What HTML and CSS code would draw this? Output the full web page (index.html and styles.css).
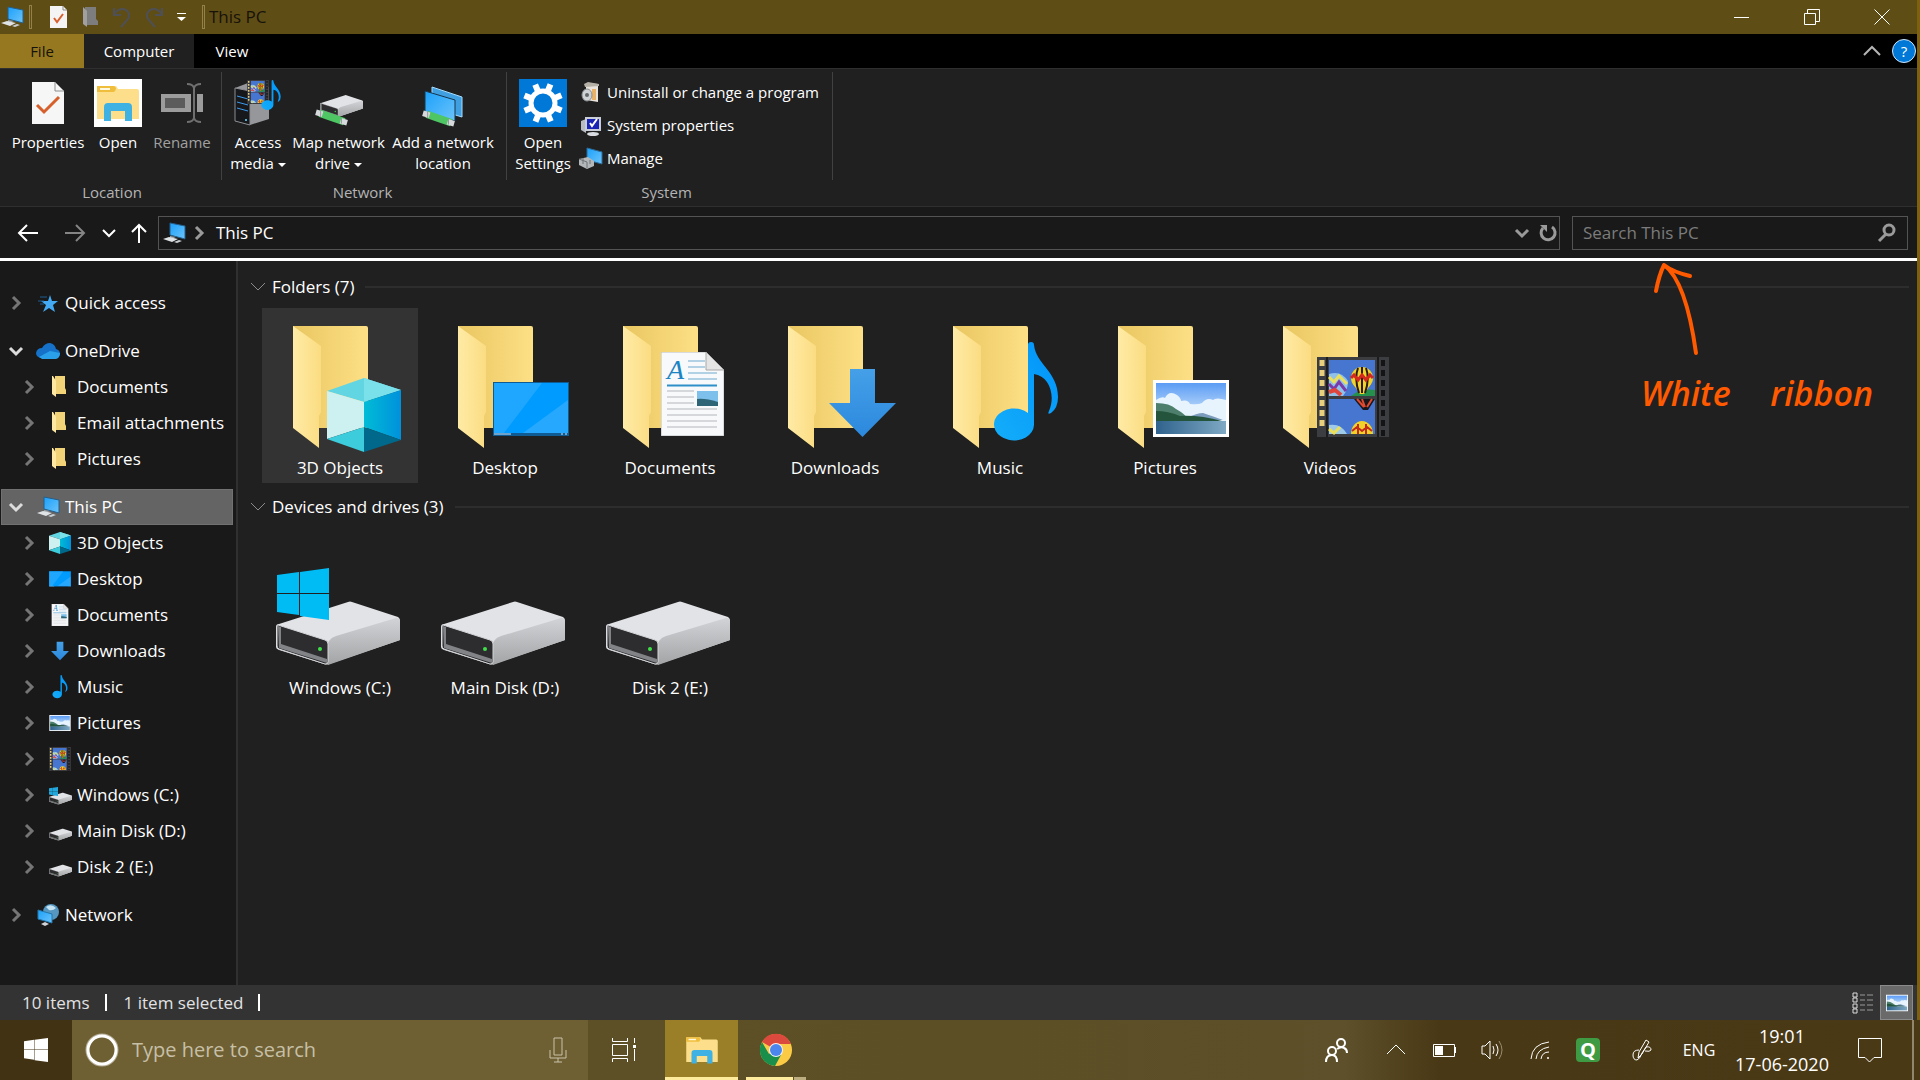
FILE: index.html
```html
<!DOCTYPE html>
<html lang="en">
<head>
  <meta charset="UTF-8">
  <meta name="viewport" content="width=device-width, initial-scale=1.0">
  <title>This PC</title>
  <link rel="stylesheet" href="styles.css">
</head>
<body>

<!-- shared icons -->
<svg class="sprites" aria-hidden="true">
  <defs>
    <linearGradient id="gBack" x1="0" x2="1"><stop offset="0" stop-color="#e9c660"/><stop offset="1" stop-color="#fde086"/></linearGradient>
    <linearGradient id="gFront" x1="0" x2="1"><stop offset="0" stop-color="#ffeba6"/><stop offset="1" stop-color="#fbdc82"/></linearGradient>
    <linearGradient id="gScreen" x1="0" y1="0" x2="1" y2="1"><stop offset="0" stop-color="#1ba0fb"/><stop offset="1" stop-color="#6cc4fa"/></linearGradient>
    <linearGradient id="gCube" x1="0" x2="1"><stop offset="0" stop-color="#00bcd6"/><stop offset="1" stop-color="#0091dc"/></linearGradient>
    <linearGradient id="gSky" x1="0" y1="0" x2="0" y2="1"><stop offset="0" stop-color="#5b9cf5"/><stop offset="1" stop-color="#dff0fb"/></linearGradient>
    <linearGradient id="gSea" x1="0" x2="1"><stop offset="0" stop-color="#2f628c"/><stop offset="1" stop-color="#7fa9c4"/></linearGradient>
    <linearGradient id="gSide" x1="0" y1="0" x2="0" y2="1"><stop offset="0" stop-color="#d2d3d6"/><stop offset="1" stop-color="#a3a4a6"/></linearGradient>
    <linearGradient id="gNote" x1="0" y1="1" x2="1" y2="0"><stop offset="0" stop-color="#14adf9"/><stop offset="1" stop-color="#0094fb"/></linearGradient>
    <linearGradient id="gDown" x1="0" y1="0" x2="0" y2="1"><stop offset="0" stop-color="#45a0e8"/><stop offset="1" stop-color="#2c88dd"/></linearGradient>

    <symbol id="folder" viewBox="0 0 156 146">
      <path d="M31 18H104Q106 18 106 20V120H31z" fill="url(#gBack)"/>
      <path d="M31 18L59 38V104L57 108V140L31 120z" fill="url(#gFront)"/>
    </symbol>
    <symbol id="cube" viewBox="0 0 74 74">
      <path d="M37 0L74 12L37 24L0 13z" fill="#62d5e2"/>
      <path d="M37 0L74 12L37 24z" fill="#7ae0ea"/>
      <path d="M0 13L37 24V49L0 61z" fill="#cdf1f1"/>
      <path d="M37 24L74 12V62L37 49z" fill="url(#gCube)"/>
      <path d="M0 61L37 49V74z" fill="#3cccdc"/>
      <path d="M37 49L74 62L37 74z" fill="#00688a"/>
    </symbol>
    <symbol id="screen" viewBox="0 0 76 54">
      <path d="M0 0H76V54H0z" fill="#0f5c94"/>
      <path d="M1 1H75V51H1z" fill="#009bff"/>
      <path d="M1 1H49L11 51H1z" fill="#1fa7ff"/>
      <path d="M75 18V51H30z" fill="#3fb0ff" opacity=".6"/>
      <path d="M1 52H18M68 52H70M72 52H74" stroke="#cfe9ff" stroke-width="1"/>
    </symbol>
    <symbol id="photo" viewBox="0 0 76 57">
      <path d="M0 0H76V57H0z" fill="#fff"/>
      <path d="M3 3H73V42H3z" fill="url(#gSky)"/>
      <path d="M3 20q6-4 9-2q4-8 12-3q4 3 4 6q7-2 9 3q8 1 12-1q5-6 11-3q3-3 13 0V42H3z" fill="#e8f4fd"/>
      <path d="M34 38q10-5 16-5q12 4 20 7H34z" fill="#7b9cbd"/>
      <path d="M3 23q14 0 20 6q9 5 12 10l6 3H3z" fill="#4d7f6c"/>
      <path d="M3 31q12 0 24 5q20-1 42 5H3z" fill="#24553c"/>
      <path d="M3 41H73V54H3z" fill="url(#gSea)"/>
    </symbol>
    <symbol id="page" viewBox="0 0 63 84">
      <path d="M0 0H45L63 18V84H0z" fill="#f8f9fa" stroke="#b9bcc0" stroke-width="1"/>
      <path d="M45 0L63 18H45z" fill="#e4e4e4" stroke="#a8a8a8" stroke-width="1"/>
      <path d="M27 9H44M27 15H44M27 21H56M27 27H56" stroke="#6fa9cf" stroke-width="1"/>
      <path d="M6 33.500H56" stroke="#2e90c9" stroke-width="2"/>
      <path d="M6 39H33M6 45H33M6 51H33M6 57H56M6 63H56M6 69H56M6 75H56" stroke="#b2b6ba" stroke-width="1"/>
      <path d="M36 39H57V54H36z" fill="#7dc0ec"/>
      <path d="M36 47q8-1 21 3v4H36z" fill="#2d6476"/>
      <text x="6" y="27" class="page-letter">A</text>
    </symbol>
    <symbol id="arrow" viewBox="0 0 67 68">
      <path d="M21 0H46V34H67L33.500 68L0 34H21z" fill="url(#gDown)"/>
    </symbol>
    <symbol id="note" viewBox="0 0 66 102">
      <path d="M35 3Q35 0 38 0Q41 0 41 3C43 22 65 30 65 55Q65 66 58 71Q54 73 56 69C63 53 56 34 41 32V83A20 16 0 1 1 35 71z" fill="url(#gNote)"/>
    </symbol>
    <symbol id="film" viewBox="0 0 72 80">
      <path d="M0 0H72V80H0z" fill="#3c3d40"/>
      <path d="M10 0V80M61 0V80" stroke="#1c1c1e" stroke-width="2"/>
      <path d="M12 3H58V39H12zM12 42H58V77H12z" fill="#4676d0"/>
      <path d="M34 39q10-8 24-6v6z" fill="#24904c"/>
      <circle cx="45" cy="21" r="11" fill="#f1d22b"/>
      <path d="M36 27L43 37H47L54 27z" fill="#f1d22b"/>
      <path d="M41 11q-4 10 1 25M49 11q4 10-1 25M45 10V36" stroke="#2a1a12" stroke-width="2" fill="none"/>
      <path d="M34 21l3-3l4 5l4-5l4 5l4-5l3 3" stroke="#d2281e" stroke-width="3" fill="none"/>
      <path d="M12 17q12-4 19 7q0 9-5 15H12z" fill="#8fc1ea"/>
      <path d="M12 20l5 5l5-6l8 8" stroke="#ece05a" stroke-width="3" fill="none"/>
      <path d="M12 27l5 5l5-7l7 9" stroke="#7a3aa8" stroke-width="3" fill="none"/>
      <path d="M12 35l6-2l6 5" stroke="#e0443a" stroke-width="4" fill="none"/>
      <path d="M37 42H58L51 53H46z" fill="#17171c"/>
      <path d="M40 42l7 8M45 42l3 8M55 42l-5 8" stroke="#e04a30" stroke-width="2"/>
      <path d="M34 77a11 13 0 0 1 22 0z" fill="#f1d22b"/>
      <path d="M41 77V67M49 77V67M35 74l5-4l5 4l5-4l5 4" stroke="#c22a1c" stroke-width="2" fill="none"/>
      <path d="M12 68q12-2 18 9H12z" fill="#9fcbe8"/>
      <path d="M12 72l5 4l6-6" stroke="#ece05a" stroke-width="3" fill="none"/>
      <path d="M5 3V72" stroke="#e8cf7d" stroke-width="5" stroke-dasharray="6 4"/>
      <path d="M66 3V80" stroke="#141416" stroke-width="4" stroke-dasharray="6 4"/>
    </symbol>
    <symbol id="drive" viewBox="0 0 124 64">
      <path d="M0 26Q0 23 3 23L72 1Q74 0 76 1L122 16Q124 17 124 20V39L53 63Q51 64 48 63L3 49Q0 48 0 46z" fill="#e2e3e7"/>
      <path d="M52 42Q54 37 60 35L120 17Q124 17 124 20V39L52 64z" fill="url(#gSide)"/>
      <path d="M2 24L49 39Q52 40 52 43V61Q52 63 49 63L3 48Q1 47 1 45V26Q1 24 2 24z" fill="#2d2d2f" stroke="#d4d5d8" stroke-width="1"/>
      <path d="M2 25L5 26V43L51 58V62L3 47z" fill="#828386"/>
      <circle cx="44" cy="48" r="2" fill="#3fe04a"/>
    </symbol>
    <symbol id="winlogo" viewBox="0 0 52 52">
      <path d="M0 7L22 4V25H0zM23 4L52 0V25H23zM0 26H22V47L0 44zM23 26H52V52L23 48z"/>
    </symbol>
    <symbol id="pc" viewBox="0 0 24 24">
      <path d="M8 2L23 5V18L8 14z" fill="url(#gScreen)" stroke="#245f8c" stroke-width="1"/>
      <path d="M8 15L14 16L9 18L8 18z" fill="#9aa4ab"/>
      <path d="M1 18L7 16L16 18L10 21z" fill="#e0e3e6"/>
      <path d="M12 21L17 19L20 20L15 22z" fill="#c9ced2"/>
    </symbol>
    <symbol id="dir" viewBox="0 0 24 24">
      <path d="M7 1H17V13L18 15V19H7z" fill="#f3d377"/>
      <path d="M4 1H5L8 6V22L4 19z" fill="#ffe9a2"/>
    </symbol>
    <symbol id="right" viewBox="0 0 16 16"><path d="M5 2L11 8L5 14" fill="none" stroke="currentColor" stroke-width="3"/></symbol>
    <symbol id="down" viewBox="0 0 16 16"><path d="M2 5L8 11L14 5" fill="none" stroke="currentColor" stroke-width="3"/></symbol>
    <symbol id="thin-down" viewBox="0 0 16 16"><path d="M1 4L8 11L15 4" fill="none" stroke="currentColor" stroke-width="1"/></symbol>
    <symbol id="explorer" viewBox="0 0 48 48">
      <path d="M3 7H22L24 10H43Q45 10 45 12V40H3z" fill="#fddf8b"/>
      <path d="M3 7H20Q24 9 20 13H3z" fill="#efbe3c"/>
      <path d="M6 9H16V11H6z" fill="#fff8de"/>
      <path d="M10 42V28Q10 24 14 24H34Q38 24 38 28V42H31V32H17V42z" fill="#3fb2e3"/>
    </symbol>
    <symbol id="cable" viewBox="0 0 36 18">
      <path d="M5 5L31 14" stroke="#4dc663" stroke-width="8"/>
      <path d="M1 4L8 6M27 13L34 15" stroke="#d7dadc" stroke-width="6"/>
      <path d="M6 2V9M28 10V16" stroke="#8f9496" stroke-width="1"/>
    </symbol>
  </defs>
</svg>

<div class="window">
  <header class="titlebar">
    <svg class="i24"><use href="#pc"/></svg>
    <span class="bar"></span>
    <button class="qa" aria-label="Properties"><svg class="i24" viewBox="0 0 24 24"><path d="M4 1H17L21 5V23H4z" fill="#f4f4f4"/><path d="M17 1V5H21" fill="none" stroke="#8b8b8b"/><path d="M8 13L11 17L17 9" fill="none" stroke="#d8602c" stroke-width="2"/></svg></button>
    <button class="qa" aria-label="New folder"><svg class="i24" viewBox="0 0 24 24"><path d="M7 2H18V14L20 16V20H7z" fill="#7d7d7d"/><path d="M5 2L9 6V22L5 19z" fill="#a0a0a0"/></svg></button>
    <button class="qa" aria-label="Undo"><svg class="i24" viewBox="0 0 24 24"><path d="M4 3V10H11M4 9Q10 2 16 5Q21 9 18 14L11 22" fill="none" stroke="#4e5055" stroke-width="2"/></svg></button>
    <button class="qa" aria-label="Redo"><svg class="i24" viewBox="0 0 24 24"><path d="M20 3V10H13M20 9Q14 2 8 5Q3 9 6 14L13 22" fill="none" stroke="#4e5055" stroke-width="2"/></svg></button>
    <button class="qa small" aria-label="Customize Quick Access Toolbar"><svg class="i16" viewBox="0 0 16 16"><path d="M4 4.500H13" stroke="#fff"/><path d="M4 8H13L8.500 12z" fill="#fff"/></svg></button>
    <span class="bar"></span>
    <h1>This PC</h1>
    <div class="caption">
      <button aria-label="Minimize"><svg class="i16" viewBox="0 0 16 16"><path d="M0 8.500H15" stroke="#fff"/></svg></button>
      <button aria-label="Restore"><svg class="i16" viewBox="0 0 16 16"><path d="M.5 4.500H11.500V15.500H.5zM3.500 4V.5H15.500V12.500H12" fill="none" stroke="#fff"/></svg></button>
      <button aria-label="Close"><svg class="i16" viewBox="0 0 16 16"><path d="M.5 .5L15.500 15.500M15.500 .5L.5 15.500" stroke="#fff"/></svg></button>
    </div>
  </header>

  <nav class="tabs">
    <button class="tab file">File</button>
    <button class="tab active">Computer</button>
    <button class="tab">View</button>
    <div class="tabs-end">
      <button aria-label="Minimize the Ribbon"><svg class="i20" viewBox="0 0 20 20"><path d="M2 14L10 6L18 14" fill="none" stroke="#b5b5b5" stroke-width="2"/></svg></button>
      <button class="help" aria-label="Help">?</button>
    </div>
  </nav>

  <section class="ribbon">
    <div class="group">
      <div class="tools">
        <button class="tool w72">
          <svg class="i48" viewBox="0 0 48 48"><path d="M8 3H31L40 12V45H8z" fill="#f6f6f6"/><path d="M31 3V12H40" fill="none" stroke="#8e8e8e"/><path d="M13 26L20 33L35 18" fill="none" stroke="#d75f2b" stroke-width="3"/></svg>
          <span>Properties</span>
        </button>
        <button class="tool w64">
          <svg class="i48 white"><use href="#explorer"/></svg>
          <span>Open</span>
        </button>
        <button class="tool w60" disabled>
          <svg class="i48" viewBox="0 0 48 48"><path d="M3 15H45V33H3z" fill="#9c9c9c"/><path d="M7 19H27V29H7z" fill="#5c5c5c"/><path d="M36 9V39" stroke="#202020" stroke-width="6"/><path d="M29 5Q35 5 36 9Q37 5 43 5M36 9V39M29 43Q35 43 36 39Q37 43 43 43" fill="none" stroke="#707070" stroke-width="2"/></svg>
          <span>Rename</span>
        </button>
      </div>
      <p>Location</p>
    </div>
    <div class="group network">
      <div class="tools">
        <button class="tool w60">
          <svg class="i48" viewBox="0 0 48 48">
            <path d="M1 9L14 4L35 8V40L16 46L1 42z" fill="#96979b"/><path d="M1 9L16 12V46L1 42z" fill="#17181c"/><path d="M1 9L16 12V46L1 42z" fill="none" stroke="#8a8c90"/><path d="M3 17L14 20M3 23L14 26M3 29L14 32" stroke="#3b9cf0"/><circle cx="12" cy="41" r="1" fill="#6fdcff"/>
            <svg x="13" y="1" width="22" height="24"><use href="#film"/></svg><svg x="27" y="1" width="20" height="31"><use href="#note"/></svg>
          </svg>
          <span>Access<br>media<i class="caret"></i></span>
        </button>
        <button class="tool w97">
          <svg class="i48" viewBox="0 0 48 48"><svg x="5" y="15" width="43" height="24"><use href="#drive"/></svg><svg x="0" y="29" width="34" height="18"><use href="#cable"/></svg></svg>
          <span>Map network<br>drive<i class="caret"></i></span>
        </button>
        <button class="tool w108">
          <svg class="i48" viewBox="0 0 48 48"><path d="M13 8L43 18V38L13 29z" fill="#3f9fe0" stroke="#a6dcff"/><path d="M6 12L36 21V42L6 33z" fill="url(#gScreen)" stroke="#16364d"/><svg x="3" y="30" width="34" height="18"><use href="#cable"/></svg></svg>
          <span>Add a network<br>location</span>
        </button>
      </div>
      <p>Network</p>
    </div>
    <div class="group system">
      <div class="tools">
        <button class="tool w60">
          <svg class="i48 blue" viewBox="0 0 48 48"><circle cx="24" cy="24" r="12" fill="none" stroke="#fff" stroke-width="5"/><g stroke="#fff" stroke-width="6"><path id="cog" d="M24 4V11M24 37V44" transform="rotate(22 24 24)"/><use href="#cog" transform="rotate(45 24 24)"/><use href="#cog" transform="rotate(90 24 24)"/><use href="#cog" transform="rotate(135 24 24)"/></g></svg>
          <span>Open<br>Settings</span>
        </button>
        <div class="rows">
          <button><svg class="i24" viewBox="0 0 24 24"><path d="M7 2L19 3V21L7 19z" fill="#e9e4dc"/><path d="M5 3L9 1L20 3V5L6 6z" fill="#b6b1a6"/><path d="M13 8H17V19H13z" fill="#e8b368"/><ellipse cx="8" cy="14" rx="5" ry="6" fill="#cfd2d5" stroke="#8b8f93"/><circle cx="8" cy="14" r="2" fill="#63676a"/></svg>Uninstall or change a program</button>
          <button><svg class="i24" viewBox="0 0 24 24"><path d="M2 7L7 5V19L2 16z" fill="#b8bcc2"/><path d="M6 3H22V17H6z" fill="#c9cdd8"/><path d="M8 5H20V15H8z" fill="#1a24b4"/><path d="M11 9L13 12L18 5" fill="none" stroke="#fff" stroke-width="2"/><ellipse cx="14" cy="20" rx="6" ry="2" fill="#d9dce0"/></svg>System properties</button>
          <button><svg class="i24" viewBox="0 0 24 24"><path d="M8 1L23 5V17L8 13z" fill="url(#gScreen)" stroke="#2a6a98"/><path d="M0 12L9 10L15 14V19L8 22L0 18z" fill="#b4b7ba"/><path d="M0 12L8 15V21M4 11V17M11 13V17" fill="none" stroke="#6f7375"/></svg>Manage</button>
        </div>
      </div>
      <p>System</p>
    </div>
  </section>

  <section class="address">
    <button aria-label="Back"><svg class="i24" viewBox="0 0 24 24"><path d="M22 12H3M11 4L3 12L11 20" fill="none" stroke="#fff" stroke-width="2"/></svg></button>
    <button class="forward" aria-label="Forward"><svg class="i24" viewBox="0 0 24 24"><path d="M2 12H21M13 4L21 12L13 20" fill="none" stroke="#858585" stroke-width="2"/></svg></button>
    <button class="recent" aria-label="Recent locations"><svg class="i16" viewBox="0 0 16 16"><path d="M2 5L8 11L14 5" fill="none" stroke="#fff" stroke-width="2"/></svg></button>
    <button class="up" aria-label="Up"><svg class="i24" viewBox="0 0 24 24"><path d="M12 22V4M5 11L12 4L19 11" fill="none" stroke="#fff" stroke-width="2"/></svg></button>
    <div class="path">
      <svg class="i24"><use href="#pc"/></svg>
      <svg class="i16 grey"><use href="#right"/></svg>
      <a href="#">This PC</a>
      <button aria-label="Previous locations"><svg class="i16 grey"><use href="#down"/></svg></button>
      <button aria-label="Refresh"><svg class="i20 grey" viewBox="0 0 20 20"><path d="M14 4A7 7 0 1 1 5 5" fill="none" stroke="currentColor" stroke-width="3"/><path d="M2 2H9V9z" fill="currentColor"/></svg></button>
    </div>
    <div class="search">
      <input type="text" placeholder="Search This PC" aria-label="Search This PC">
      <svg class="i20 grey" viewBox="0 0 20 20"><circle cx="12" cy="7" r="5" fill="none" stroke="currentColor" stroke-width="3"/><path d="M9 11L2 18" stroke="currentColor" stroke-width="3"/></svg>
    </div>
  </section>

  <main>
    <aside>
      <ul>
        <li><svg class="i16 arr"><use href="#right"/></svg><svg class="i24" viewBox="0 0 24 24"><path d="M14 4L16 10L22 10L17 14L19 21L13 17L7 21L10 14L5 10L12 10z" fill="#43a9f2"/><path d="M4 6H11M2 10H8M4 13H8" stroke="#1e5f93"/></svg><a href="#">Quick access</a></li>
      </ul>
      <ul>
        <li><svg class="i16 open"><use href="#down"/></svg><svg class="i24" viewBox="0 0 24 24"><path d="M5 19Q0 18 0 14Q1 9 6 9Q9 4 14 4Q19 5 20 10Q24 11 24 15Q23 19 20 19z" fill="#1572c8"/><path d="M3 18L14 12L24 14Q24 19 20 20H6z" fill="#2ba0ea"/></svg><a href="#">OneDrive</a></li>
        <li class="sub"><svg class="i16 arr"><use href="#right"/></svg><svg class="i24"><use href="#dir"/></svg><a href="#">Documents</a></li>
        <li class="sub"><svg class="i16 arr"><use href="#right"/></svg><svg class="i24"><use href="#dir"/></svg><a href="#">Email attachments</a></li>
        <li class="sub"><svg class="i16 arr"><use href="#right"/></svg><svg class="i24"><use href="#dir"/></svg><a href="#">Pictures</a></li>
      </ul>
      <ul>
        <li class="selected"><svg class="i16 open"><use href="#down"/></svg><svg class="i24"><use href="#pc"/></svg><a href="#">This PC</a></li>
        <li class="sub"><svg class="i16 arr"><use href="#right"/></svg><svg class="i24" viewBox="0 0 24 24"><svg x="1" y="1" width="22" height="22"><use href="#cube"/></svg></svg><a href="#">3D Objects</a></li>
        <li class="sub"><svg class="i16 arr"><use href="#right"/></svg><svg class="i24" viewBox="0 0 24 24"><svg x="1" y="4" width="22" height="16"><use href="#screen"/></svg></svg><a href="#">Desktop</a></li>
        <li class="sub"><svg class="i16 arr"><use href="#right"/></svg><svg class="i24" viewBox="0 0 24 24"><svg x="3" y="1" width="18" height="22"><use href="#page"/></svg></svg><a href="#">Documents</a></li>
        <li class="sub"><svg class="i16 arr"><use href="#right"/></svg><svg class="i24" viewBox="0 0 24 24"><svg x="3" y="2" width="18" height="20"><use href="#arrow"/></svg></svg><a href="#">Downloads</a></li>
        <li class="sub"><svg class="i16 arr"><use href="#right"/></svg><svg class="i24"><use href="#note"/></svg><a href="#">Music</a></li>
        <li class="sub"><svg class="i16 arr"><use href="#right"/></svg><svg class="i24" viewBox="0 0 24 24"><svg x="1" y="4" width="22" height="16"><use href="#photo"/></svg></svg><a href="#">Pictures</a></li>
        <li class="sub"><svg class="i16 arr"><use href="#right"/></svg><svg class="i24"><use href="#film"/></svg><a href="#">Videos</a></li>
        <li class="sub"><svg class="i16 arr"><use href="#right"/></svg><svg class="i24" viewBox="0 0 24 24"><svg x="1" y="9" width="23" height="13"><use href="#drive"/></svg><svg x="1" y="4" width="9" height="9" fill="#22a7dd"><use href="#winlogo"/></svg></svg><a href="#">Windows (C:)</a></li>
        <li class="sub"><svg class="i16 arr"><use href="#right"/></svg><svg class="i24" viewBox="0 0 24 24"><svg x="1" y="9" width="23" height="13"><use href="#drive"/></svg></svg><a href="#">Main Disk (D:)</a></li>
        <li class="sub"><svg class="i16 arr"><use href="#right"/></svg><svg class="i24" viewBox="0 0 24 24"><svg x="1" y="9" width="23" height="13"><use href="#drive"/></svg></svg><a href="#">Disk 2 (E:)</a></li>
      </ul>
      <ul>
        <li><svg class="i16 arr"><use href="#right"/></svg><svg class="i24" viewBox="0 0 24 24"><circle cx="15" cy="9" r="8" fill="#5597c0"/><path d="M10 4Q15 0 20 5Q17 8 13 7z" fill="#c5e3f2"/><path d="M2 7L16 11V20L2 16z" fill="url(#gScreen)" stroke="#2277ac"/><path d="M5 21L9 19L13 21L9 23z" fill="#cfd5d8"/></svg><a href="#">Network</a></li>
      </ul>
    </aside>

    <div class="content">
      <h2><svg class="i16"><use href="#thin-down"/></svg>Folders (7)</h2>
      <div class="tiles">
        <a href="#" class="tile hot"><svg viewBox="0 0 156 146"><use href="#folder"/><svg x="65" y="70" width="74" height="74"><use href="#cube"/></svg></svg>3D Objects</a>
        <a href="#" class="tile"><svg viewBox="0 0 156 146"><use href="#folder"/><svg x="66" y="74" width="76" height="54"><use href="#screen"/></svg></svg>Desktop</a>
        <a href="#" class="tile"><svg viewBox="0 0 156 146"><use href="#folder"/><svg x="69" y="44" width="63" height="84"><use href="#page"/></svg></svg>Documents</a>
        <a href="#" class="tile"><svg viewBox="0 0 156 146"><use href="#folder"/><svg x="72" y="61" width="67" height="68"><use href="#arrow"/></svg></svg>Downloads</a>
        <a href="#" class="tile"><svg viewBox="0 0 156 146"><use href="#folder"/><svg x="71" y="34" width="66" height="102"><use href="#note"/></svg></svg>Music</a>
        <a href="#" class="tile"><svg viewBox="0 0 156 146"><use href="#folder"/><svg x="66" y="72" width="76" height="57"><use href="#photo"/></svg></svg>Pictures</a>
        <a href="#" class="tile"><svg viewBox="0 0 156 146"><use href="#folder"/><svg x="65" y="49" width="72" height="80"><use href="#film"/></svg></svg>Videos</a>
      </div>
      <h2><svg class="i16"><use href="#thin-down"/></svg>Devices and drives (3)</h2>
      <div class="tiles">
        <a href="#" class="tile"><svg viewBox="0 0 156 146"><svg x="14" y="73" width="124" height="64"><use href="#drive"/></svg><svg x="15" y="40" width="52" height="52" fill="#00bcf5"><use href="#winlogo"/></svg></svg>Windows (C:)</a>
        <a href="#" class="tile"><svg viewBox="0 0 156 146"><svg x="14" y="73" width="124" height="64"><use href="#drive"/></svg></svg>Main Disk (D:)</a>
        <a href="#" class="tile"><svg viewBox="0 0 156 146"><svg x="14" y="73" width="124" height="64"><use href="#drive"/></svg></svg>Disk 2 (E:)</a>
      </div>

      <!-- pen markup over the pane -->
      <div class="markup">
        <svg viewBox="0 0 60 100" width="60" height="100"><path d="M5 30Q8 14 13 4Q22 11 39 15M13 4Q35 20 45 92" fill="none" stroke="#ff5a00" stroke-width="4" stroke-linecap="round" stroke-linejoin="round"/></svg>
        <p><span>White</span> <span>ribbon</span></p>
      </div>
    </div>
  </main>

  <footer class="status">
    <span>10 items</span><i></i><span>1 item selected</span><i></i>
    <div class="views">
      <button aria-label="Details"><svg class="i24" viewBox="0 0 24 24"><path d="M2 2H6V6H2zM2 7H6V11H2zM2 13H6V17H2zM2 18H6V22H2z" fill="#333" stroke="#ddd"/><path d="M9 4H14M16 4H22M9 9H14M16 9H22M9 14H14M16 14H22M9 19H14M16 19H22" stroke="#9a9a9a"/></svg></button>
      <button class="on" aria-label="Large icons"><svg class="i22"><use href="#photo"/></svg></button>
    </div>
  </footer>
</div>

<footer class="taskbar">
  <button class="start" aria-label="Start"><svg class="i24" fill="#fff"><use href="#winlogo"/></svg></button>
  <label class="cortana">
    <svg width="34" height="34" viewBox="0 0 34 34"><circle cx="17" cy="17" r="15" fill="none" stroke="#b5ac95" stroke-width="3"/><circle cx="17" cy="17" r="14" fill="none" stroke="#fff" stroke-width="3"/></svg>
    <input type="text" placeholder="Type here to search" aria-label="Type here to search">
    <svg width="20" height="26" viewBox="0 0 20 26"><path d="M6 1H14V18H6zM2 13V21H18V13M10 21V25M6 25H14" fill="none" stroke="#c9c2ab" stroke-width="1"/></svg>
  </label>
  <button class="view" aria-label="Task View"><svg width="26" height="26" viewBox="0 0 26 26"><path d="M1.500 1V4.500H16.500V1M1.500 7.500H16.500V18.500H1.500zM1.500 25V21.500H16.500V25M23.500 1V6M23.500 12V24" fill="none" stroke="#fff"/><path d="M22 8H25V11H22z" fill="#fff"/></svg></button>
  <button class="app current" aria-label="File Explorer"><svg width="36" height="36"><use href="#explorer"/></svg></button>
  <button class="app chrome" aria-label="Google Chrome"><svg width="34" height="34" viewBox="0 0 34 34"><circle cx="17" cy="17" r="16" fill="#fccb45"/><path d="M17 17L3 9A16 16 0 0 1 31 9H17z" fill="#dc4a3d"/><path d="M3 9A16 16 0 0 0 16 33L22 22L17 17L10 21z" fill="#1a8f4c"/><path d="M31 9H17V11H32z" fill="#dc4a3d"/><circle cx="17" cy="17" r="7" fill="#f2f2f2"/><circle cx="17" cy="17" r="6" fill="#4a86ee"/></svg></button>
  <div class="tray">
    <button class="people" aria-label="People"><svg width="24" height="26" viewBox="0 0 24 26"><g fill="none" stroke="#fff" stroke-width="2"><circle cx="17" cy="6" r="4"/><path d="M13 12Q17 9 20 11Q23 12 23 16"/><circle cx="8" cy="14" r="4"/><path d="M2 25Q2 18 8 18Q13 18 13 25"/></g></svg></button>
    <button aria-label="Show hidden icons"><svg class="i20" viewBox="0 0 20 20"><path d="M1 14L10 5L19 14" fill="none" stroke="#fff"/></svg></button>
    <button aria-label="Battery"><svg class="i24" viewBox="0 0 24 24"><path d="M1.500 6.500H22.500V18.500H1.500zM23.500 9V15" fill="none" stroke="#fff"/><path d="M3 8H11V17H3z" fill="#fff"/></svg></button>
    <button aria-label="Volume"><svg class="i24" viewBox="0 0 24 24"><path d="M2 8H5L10 3V21L5 16H2zM13 8Q15 12 13 16M16 6Q20 12 16 18" fill="none" stroke="#fff"/><path d="M19 3Q25 12 19 21" fill="none" stroke="#998d70"/></svg></button>
    <button aria-label="Wi-Fi"><svg class="i24" viewBox="0 0 24 24"><path d="M3 21Q4 6 21 4M8 21Q9 11 21 9M13 21Q14 14 21 14" fill="none" stroke="#fff"/><circle cx="20" cy="20" r="1" fill="#fff"/></svg></button>
    <button aria-label="Quick Heal"><b class="q">Q</b></button>
    <button class="ink" aria-label="Windows Ink"><svg class="i24" viewBox="0 0 24 24"><path d="M8 20L9 14L16 2L19 4L12 16zM9 12Q3 12 3 17Q3 22 7 22Q10 21 12 15L16 9Q21 8 21 12Q20 14 15 13" fill="none" stroke="#fff"/></svg></button>
    <button class="lang">ENG</button>
    <button class="clock">19:01<br>17-06-2020</button>
    <button class="notify" aria-label="Notifications"><svg width="26" height="26" viewBox="0 0 26 26"><path d="M1.500 1.500H24.500V20.500H17L12.500 25L8 20.500H1.500z" fill="none" stroke="#fff"/></svg></button>
  </div>
</footer>

</body>
</html>
```
FILE: styles.css
```css
* { box-sizing: border-box; }
body {
  margin: 0;
  min-height: 100vh;
  display: flex;
  flex-direction: column;
  font-family: 'Open Sans', 'Noto Sans', sans-serif;
  font-size: 17px;
  line-height: 24px;
  background: #202020;
  color: #fff;
}
h1, h2, p, ul { margin: 0; padding: 0; font-weight: 400; }
ul { list-style: none; }
a { color: inherit; text-decoration: none; }
svg { display: block; flex: none; }
button {
  display: flex;
  align-items: center;
  justify-content: center;
  padding: 0;
  border: none;
  background: none;
  color: inherit;
  font: inherit;
}
input {
  flex: 1;
  min-width: 0;
  padding: 0;
  border: none;
  outline: none;
  background: none;
  color: #fff;
  font: inherit;
}
.sprites { position: absolute; width: 0; height: 0; }
.page-letter { font: italic 28px 'Liberation Serif', serif; fill: #1c84c4; }
.i16 { width: 16px; height: 16px; }
.i20 { width: 20px; height: 20px; }
.i22 { width: 22px; height: 22px; }
.i24 { width: 24px; height: 24px; }
.i48 { width: 48px; height: 48px; }
.grey { color: #9a9a9a; }
.white { background: #fff; }
.blue { background: #0078d7; }

.window {
  flex: 1;
  display: flex;
  flex-direction: column;
  border-right: 3px solid #7f600c;
}

/* title bar */
.titlebar {
  display: flex;
  align-items: center;
  height: 34px;
  background: #5f4d16;
  color: #17130a;
}
.titlebar .bar { width: 3px; height: 24px; border: 1px solid #94814a; margin-left: 5px; }
.qa { width: 32px; }
.bar + .qa { margin-left: 10px; }
.qa.small { width: 22px; margin-right: 5px; }
.titlebar h1 { font-size: 17px; margin-left: 4px; flex: 1; }
.caption { display: flex; }
.caption button { width: 70px; height: 34px; }

/* tabs */
.tabs {
  display: flex;
  height: 34px;
  background: #000;
  font-size: 15px;
}
.tab { width: 76px; }
.tab.file { width: 84px; background: #967820; color: #17130a; }
.tab.active { width: 110px; background: #202020; }
.tabs-end { display: flex; align-items: center; gap: 10px; margin-left: auto; padding-right: 1px; }
.help {
  width: 24px;
  height: 24px;
  border: 1px solid #cfe6f8;
  border-radius: 50%;
  background: #0078d7;
}

/* ribbon */
.ribbon {
  display: flex;
  height: 139px;
  border-top: 1px solid #2f2f2f;
  border-bottom: 1px solid #2f2f2f;
  background: #202020;
  font-size: 15px;
  line-height: 21px;
}
.group { position: relative; padding: 10px 10px 0 12px; }
.group::after { /* divider stops above the group name */
  content: '';
  position: absolute;
  top: 3px;
  right: 0;
  height: 108px;
  border-right: 1px solid #414141;
}
.group.network { padding: 10px 10px 0 6px; }
.group.system { padding: 10px 13px 0 6px; }
.tools { display: flex; gap: 2px; height: 103px; align-items: flex-start; }
.tool { flex-direction: column; gap: 5px; white-space: nowrap; }
.tool:disabled { color: #a0a0a0; }
.w60 { width: 60px; }
.w64 { width: 64px; }
.w72 { width: 72px; }
.w97 { width: 97px; }
.w108 { width: 108px; }
.group p { text-align: center; color: #b4b4b4; }
.caret {
  display: inline-block;
  margin-left: 4px;
  border: 4px solid transparent;
  border-top-color: #fff;
  border-bottom: none;
  vertical-align: middle;
}
.rows { width: 245px; padding-left: 4px; margin-top: -3px; }
.rows button { height: 33px; gap: 4px; white-space: nowrap; }

/* address bar */
.address {
  display: flex;
  align-items: center;
  height: 51px;
  padding: 0 9px 0 16px;
  background: #191919;
}
.forward { margin-left: 23px; }
.recent { margin-left: 14px; }
.up { margin-left: 10px; }
.path, .search {
  display: flex;
  align-items: center;
  height: 34px;
  border: 1px solid #535353;
}
.path { flex: 1; margin-left: 7px; padding: 0 1px 0 3px; }
.path > .grey { margin-left: 5px; }
.path a { flex: 1; margin-left: 9px; }
.path button { margin-left: 8px; }
.search { width: 336px; margin-left: 12px; padding: 0 10px; }
.search input::placeholder { color: #7c7c7c; opacity: 1; }

/* main area */
main {
  flex: 1;
  display: flex;
  border-top: 3px solid #fff;
}
aside {
  width: 238px;
  padding: 24px 3px 0 1px;
  border-right: 2px solid #303030;
  background: #191919;
}
aside ul + ul { margin-top: 12px; }
aside li {
  display: flex;
  align-items: center;
  height: 36px;
  padding-left: 7px;
  white-space: nowrap;
}
aside li > .i24 { margin: 0 5px 0 12px; }
aside li.sub { padding-left: 20px; }
aside li.sub > .i24 { margin: 0 5px 0 11px; }
aside li.selected { background: #646464; border: 1px solid #717171; padding-left: 6px; }
.arr { color: #757575; }
.open { color: #dcdcdc; }

.content { flex: 1; position: relative; padding: 5px 8px 0 12px; }
h2 {
  display: flex;
  align-items: center;
  height: 42px;
  font-size: 17px;
  white-space: nowrap;
}
h2 .i16 { color: #8a8a8a; margin-right: 6px; }
h2::after { content: ''; flex: 1; height: 2px; margin-left: 11px; background: #2d2d2d; }
.tiles { display: flex; flex-wrap: wrap; gap: 9px; padding-left: 12px; margin-bottom: 3px; }
.tile { width: 156px; height: 175px; line-height: 28px; text-align: center; }
.tile > svg { width: 156px; height: 146px; }
.tile.hot { background: #333; }

.markup { position: absolute; top: 0; right: 44px; width: 232px; color: #ff5a00; }
.markup svg { margin-left: 10px; }
.markup p {
  display: flex;
  justify-content: space-between;
  font: italic 600 34px/56px 'Open Sans', sans-serif;
  margin-top: 4px;
}

/* status bar */
.status {
  display: flex;
  align-items: center;
  height: 35px;
  padding: 0 4px 0 22px;
  background: #333;
  color: #e2e2e2;
}
.status i { width: 2px; height: 17px; margin: 0 17px 0 15px; background: #fff; }
.views { display: flex; align-items: center; gap: 5px; margin-left: auto; }
.views .on { width: 33px; height: 35px; background: #6a6a6a; border: 1px solid #8b8b8b; }

/* taskbar */
.taskbar {
  display: flex;
  height: 60px;
  background: linear-gradient(90deg, #5f5128 0, #5c4f25 50%, #5d502a 70%, #493815 75%, #4a3915 100%);
}
.start { width: 72px; background: #403212; }
.cortana {
  display: flex;
  align-items: center;
  width: 516px;
  padding: 0 20px 0 13px;
  background: #6e6033;
  font-size: 20px;
}
.cortana input { margin-left: 13px; }
.cortana input::placeholder { color: #c6bfa6; opacity: 1; }
.view { width: 72px; margin-right: 5px; }
.app { position: relative; width: 73px; }
.app.current { background: #9a7f28; border-bottom: 3px solid #ffeb9c; padding-top: 3px; }
.app.chrome { width: 76px; }
.app.chrome::after {
  content: '';
  position: absolute;
  left: 8px;
  bottom: 0;
  width: 60px;
  height: 3px;
  background: linear-gradient(90deg, #ffeb9c 47px, transparent 47px, transparent 48px, #bcae80 48px);
}
.tray { display: flex; margin-left: auto; padding-right: 10px; border-right: 2px solid #92876c; margin-right: 6px; }
.tray button { width: 48px; }
.tray .people { width: 72px; }
.q {
  width: 24px;
  border-radius: 4px;
  background: #3f9a44;
  font-size: 20px;
}
.tray .ink { width: 60px; }
.tray .lang { width: 54px; font-size: 16px; }
.tray .clock { width: 112px; font-size: 18px; line-height: 28px; }
.tray .notify { width: 64px; }
```
